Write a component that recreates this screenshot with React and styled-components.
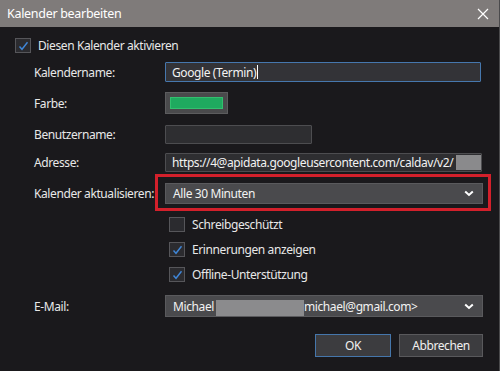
import styled, { createGlobalStyle } from "styled-components";

const GlobalStyle = createGlobalStyle`
  html, body {
    margin: 0;
    padding: 0;
    background: #1a191c;
  }
  body {
    font-family: "Noto Sans", "Open Sans", sans-serif;
  }
`;

const Window = styled.div`
  width: 500px;
  height: 371px;
  box-sizing: border-box;
  background: #1a191c;
  border-right: 1px solid #4a4a4c;
  display: flex;
  flex-direction: column;
  overflow: hidden;
  color: #e8e8e8;
  font-size: 12px;
  line-height: 15px;
  letter-spacing: -0.4px;
`;

const TitleBar = styled.div`
  height: 27px;
  flex: none;
  background: #7f7b7a;
  display: flex;
  align-items: center;
  justify-content: space-between;
  padding: 0 10px 0 7px;
  color: #ffffff;
  font-size: 12.5px;
  letter-spacing: -0.3px;
`;

const Body = styled.div`
  display: flex;
  flex-direction: column;
  padding: 0 16px 0 15px;
`;

const Row = styled.div`
  display: flex;
  align-items: center;
  margin-top: ${(p) => p.$mt}px;
  padding-left: ${(p) => p.$indent || 0}px;
`;

const Label = styled.div`
  width: 131px;
  flex: none;
  padding-left: 19px;
  white-space: nowrap;
`;

const Box = styled.div`
  width: 16px;
  height: 15px;
  box-sizing: border-box;
  flex: none;
  background: #2b2b2f;
  border: 1px solid #56565a;
  display: flex;
  align-items: center;
  justify-content: center;
  margin-right: 7px;
`;

const TextField = styled.div`
  width: ${(p) => p.$w}px;
  height: ${(p) => p.$h || 20}px;
  box-sizing: border-box;
  background: ${(p) => (p.$focus ? "#333337" : "#2e2e31")};
  border: 1px solid ${(p) => (p.$focus ? "#4677ad" : "#4d4d50")};
  border-radius: 1px;
  display: flex;
  align-items: center;
  padding-left: 6px;
  white-space: nowrap;
  overflow: hidden;
  color: #f2f2f2;
  font-size: 12px;
`;

const Caret = styled.span`
  display: inline-block;
  width: 1px;
  height: 14px;
  background: #ffffff;
  margin-left: 1px;
`;

const Redact = styled.span`
  flex: 1;
  min-width: 20px;
  align-self: stretch;
  background: #8a8a8c;
  margin: 1px 0 1px 3px;
`;

const ColorButton = styled.div`
  width: 63px;
  height: 22px;
  box-sizing: border-box;
  background: #4a4a4c;
  border: 1px solid #5c5c5e;
  padding: 4px;
`;

const Swatch = styled.div`
  width: 100%;
  height: 100%;
  background: #1faa5f;
  border: 1px solid #33c06f;
  box-sizing: border-box;
`;

const Highlight = styled.div`
  position: relative;
`;

const HighlightFrame = styled.span`
  position: absolute;
  top: -9px;
  left: -10px;
  right: -8px;
  bottom: -7px;
  border: 3px solid #d3202b;
  pointer-events: none;
`;

const Select = styled.div`
  width: 318px;
  height: ${(p) => p.$h}px;
  box-sizing: border-box;
  background: #4a4a4d;
  border: 1px solid #5a5a5d;
  display: flex;
  align-items: center;
  padding: 0 8px 0 7px;
  white-space: nowrap;
  color: #f2f2f2;
`;

const SelectText = styled.span`
  flex: 1;
  display: flex;
  align-items: center;
  align-self: stretch;
`;

const Block = styled.span`
  width: 88px;
  align-self: stretch;
  margin: 4px 0 0 2px;
  background: #8b8b8d;
`;

const Footer = styled.div`
  display: flex;
  justify-content: flex-end;
  gap: 8px;
  margin-top: 17px;
`;

const Button = styled.div`
  width: ${(p) => p.$w}px;
  height: 23px;
  box-sizing: border-box;
  background: #3c3c3f;
  border: 1px solid ${(p) => (p.$primary ? "#4576ab" : "#59595c")};
  display: flex;
  align-items: center;
  justify-content: center;
  color: #f0f0f0;
`;

const Check = () => (
  <svg width="11" height="10" viewBox="0 0 11 10">
    <path d="M1.5 5.5 L4 8.3 L9.5 1.2" fill="none" stroke="#3f86d8" strokeWidth="1.4" />
  </svg>
);

const Chevron = () => (
  <svg width="10" height="7" viewBox="0 0 10 7">
    <path d="M1.2 1.5 L5 5 L8.8 1.5" fill="none" stroke="#ffffff" strokeWidth="2" />
  </svg>
);

const CloseIcon = () => (
  <svg width="12" height="12" viewBox="0 0 12 12">
    <path d="M1 1 L11 11 M11 1 L1 11" stroke="#ffffff" strokeWidth="1.2" />
  </svg>
);

const CheckRow = ({ checked, children, mt, indent }) => (
  <Row $mt={mt} $indent={indent}>
    <Box>{checked && <Check />}</Box>
    <span>{children}</span>
  </Row>
);

const App = () => {
  return (
    <Window>
      <GlobalStyle />
      <TitleBar>
        <span>Kalender bearbeiten</span>
        <CloseIcon />
      </TitleBar>
      <Body>
        <CheckRow checked mt={11}>
          Diesen Kalender aktivieren
        </CheckRow>

        <Row $mt={9}>
          <Label>Kalendername:</Label>
          <TextField $w={316} $focus>
            Google (Termin)
            <Caret />
          </TextField>
        </Row>

        <Row $mt={10}>
          <Label>Farbe:</Label>
          <ColorButton>
            <Swatch />
          </ColorButton>
        </Row>

        <Row $mt={11}>
          <Label>Benutzername:</Label>
          <TextField $w={147} $h={19} />
        </Row>

        <Row $mt={9}>
          <Label>Adresse:</Label>
          <TextField $w={317} $h={19}>
            https://4@apidata.googleusercontent.com/caldav/v2/
            <Redact />
          </TextField>
        </Row>

        <Row $mt={11}>
          <Label>Kalender aktualisieren:</Label>
          <Highlight>
            <Select $h={21}>
              <SelectText>Alle 30 Minuten</SelectText>
              <Chevron />
            </Select>
            <HighlightFrame />
          </Highlight>
        </Row>

        <CheckRow mt={13} indent={154}>
          Schreibgeschützt
        </CheckRow>
        <CheckRow checked mt={10} indent={154}>
          Erinnerungen anzeigen
        </CheckRow>
        <CheckRow checked mt={10} indent={154}>
          Offline-Unterstützung
        </CheckRow>

        <Row $mt={13}>
          <Label>E-Mail:</Label>
          <Select $h={22}>
            <SelectText>
              Michael
              <Block />
              michael@gmail.com&gt;
            </SelectText>
            <Chevron />
          </Select>
        </Row>

        <Footer>
          <Button $w={76} $primary>
            OK
          </Button>
          <Button $w={84}>Abbrechen</Button>
        </Footer>
      </Body>
    </Window>
  );
};

export default App;
